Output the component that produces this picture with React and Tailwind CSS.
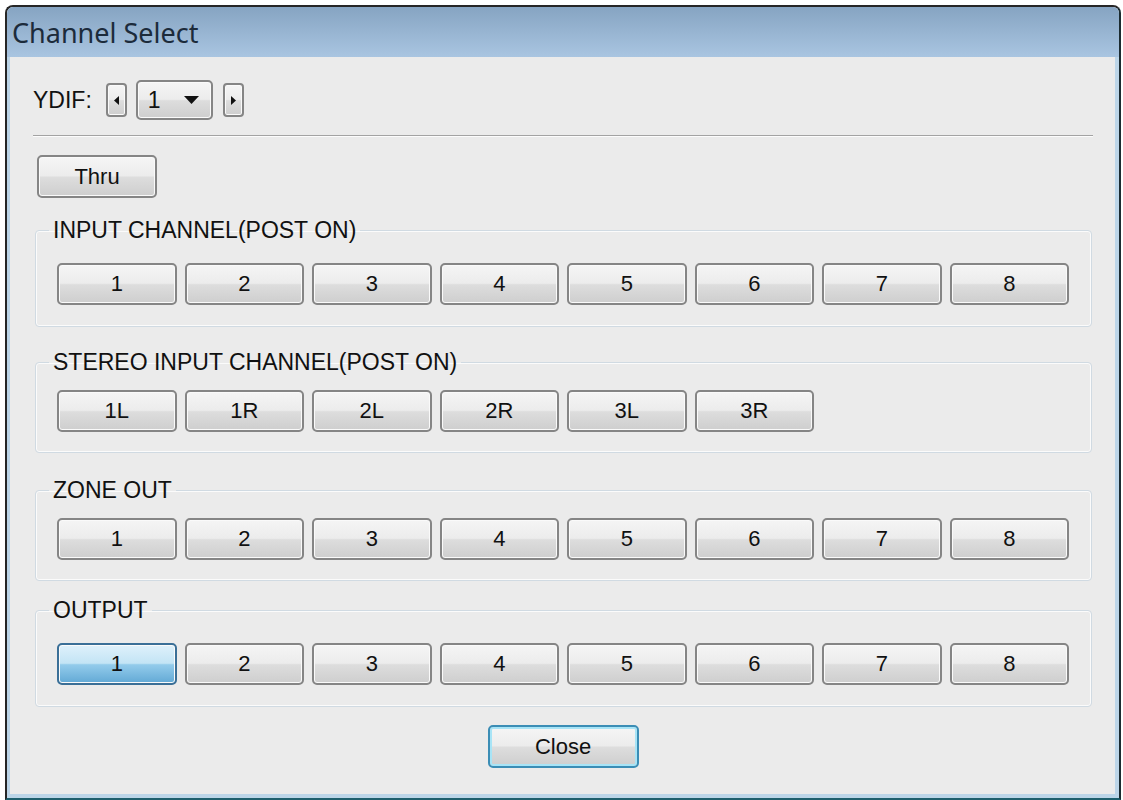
import { useState } from "react";

const greyFace =
  "bg-[linear-gradient(to_bottom,#f5f5f5_0%,#ececec_48%,#dddddd_52%,#cecece_100%)]";
const blueFace =
  "bg-[linear-gradient(to_bottom,#dff1fb_0%,#c3e4f5_48%,#93cbeb_52%,#62a9d5_100%)]";

function WinButton({ label, active, onClick, className = "" }) {
  return (
    <button
      onClick={onClick}
      className={
        (active
          ? blueFace + " border-[#3a6f97]"
          : greyFace + " border-[#858585]") +
        " flex items-center justify-center rounded-[5px] border-2 shadow-[inset_0_0_0_1px_#fafafa] text-[22px] leading-none text-[#111] " +
        className
      }
    >
      {label}
    </button>
  );
}

function Arrow({ dir }) {
  return (
    <button
      className={
        greyFace +
        " flex items-center justify-center w-[21px] h-[34px] rounded-[4px] border-2 border-[#858585] shadow-[inset_0_0_0_1px_#fafafa]"
      }
    >
      <svg width="5" height="9" viewBox="0 0 5 9">
        {dir == "left" ? (
          <path d="M5 0 L0 4.5 L5 9 Z" fill="#111" />
        ) : (
          <path d="M0 0 L5 4.5 L0 9 Z" fill="#111" />
        )}
      </svg>
    </button>
  );
}

function Group({ title, items, selected, onSelect, group, pad }) {
  return (
    <fieldset
      className={
        "ml-[2px] mr-[1px] rounded-[4px] border border-[#d0dae2] shadow-[inset_0_0_0_1px_#fbfbfb] pl-[21px] pr-[22px] " +
        pad
      }
    >
      <legend className="-ml-[8px] px-[4px] text-[23px] leading-[24px] text-[#111]">
        {title}
      </legend>
      <div className="grid grid-cols-8 gap-x-[8px]">
        {items.map((item) => (
          <WinButton
            key={item}
            label={item}
            active={selected == group + ":" + item}
            onClick={() => onSelect(group + ":" + item)}
            className="h-[42px]"
          />
        ))}
      </div>
    </fieldset>
  );
}

const nums = ["1", "2", "3", "4", "5", "6", "7", "8"];
const stereo = ["1L", "1R", "2L", "2R", "3L", "3R"];

export default function App() {
  const [selected, setSelected] = useState("out:1");

  return (
    <div className="w-[1123px] h-[800px] bg-white overflow-hidden font-['Liberation_Sans',Arial,sans-serif]">
      <div className="ml-[5px] mt-[5px] w-[1116px] h-[795px] flex flex-col rounded-t-[8px] border-2 border-[#262626] border-b-[#1e5f6d] border-r-[#1b2b30] overflow-hidden">
        <div className="h-[50px] shrink-0 flex items-center pl-[5px] bg-[linear-gradient(to_bottom,#86a4c2,#a9c5e1)]">
          <span className="font-['Noto_Sans',sans-serif] text-[27px] leading-none text-[#1c2b3b]">
            Channel Select
          </span>
        </div>
        <div className="flex-1 flex flex-col bg-[#ebebeb] border-l-[3px] border-r-[4px] border-b-[4px] border-[#bcd5e8] pl-[23px] pr-[22px] pt-[23px]">
          <div className="flex items-center h-[40px]">
            <span className="text-[23px] leading-none text-[#111]">YDIF:</span>
            <div className="ml-[14px]">
              <Arrow dir="left" />
            </div>
            <button
              className={
                greyFace +
                " ml-[9px] w-[77px] h-[40px] flex items-center justify-between pl-[10px] pr-[12px] rounded-[5px] border-2 border-[#858585] shadow-[inset_0_0_0_1px_#fafafa]"
              }
            >
              <span className="text-[23px] leading-none text-[#111]">1</span>
              <svg width="15" height="8" viewBox="0 0 15 8">
                <path d="M0 0 L15 0 L7.5 8 Z" fill="#111" />
              </svg>
            </button>
            <div className="ml-[10px]">
              <Arrow dir="right" />
            </div>
          </div>

          <div className="mt-[15px] border-t border-b border-t-[#a3a3a3] border-b-[#fcfcfc]" />

          <WinButton
            label="Thru"
            className="mt-[18px] ml-[4px] w-[120px] h-[43px]"
          />

          <div className="mt-[20px]">
            <Group
              title="INPUT CHANNEL(POST ON)"
              items={nums}
              group="in"
              selected={selected}
              onSelect={setSelected}
              pad="pt-[21px] pb-[21px]"
            />
          </div>
          <div className="mt-[23px]">
            <Group
              title="STEREO INPUT CHANNEL(POST ON)"
              items={stereo}
              group="st"
              selected={selected}
              onSelect={setSelected}
              pad="pt-[16px] pb-[20px]"
            />
          </div>
          <div className="mt-[25px]">
            <Group
              title="ZONE OUT"
              items={nums}
              group="zone"
              selected={selected}
              onSelect={setSelected}
              pad="pt-[16px] pb-[20px]"
            />
          </div>
          <div className="mt-[17px]">
            <Group
              title="OUTPUT"
              items={nums}
              group="out"
              selected={selected}
              onSelect={setSelected}
              pad="pt-[21px] pb-[21px]"
            />
          </div>

          <div className="mt-[18px] flex justify-center">
            <button
              className={
                greyFace +
                " w-[151px] h-[43px] flex items-center justify-center rounded-[5px] border-2 border-[#3b8db5] shadow-[inset_0_0_0_2px_#a8e4f6] text-[22px] leading-none text-[#111]"
              }
            >
              Close
            </button>
          </div>
        </div>
      </div>
    </div>
  );
}
